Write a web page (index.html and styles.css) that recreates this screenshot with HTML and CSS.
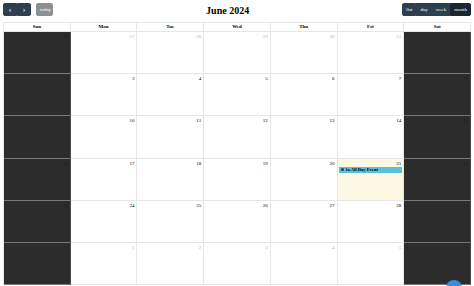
FILE: index.html
```html
<!DOCTYPE html>
<html lang="en">
<head>
    <meta charset="UTF-8">
    <title>Calendar</title>
    <link rel="stylesheet" href="styles.css">
</head>
<body>
    <div class="calendar">
        <div class="toolbar">
            <div class="left">
                <div class="btn-group">
                    <button class="btn">&#8249;</button>
                    <button class="btn">&#8250;</button>
                </div>
                <button class="btn btn-today">today</button>
            </div>
            <h2 class="title">June 2024</h2>
            <div class="btn-group">
                <button class="btn">list</button>
                <button class="btn">day</button>
                <button class="btn">week</button>
                <button class="btn active">month</button>
            </div>
        </div>

        <div class="grid">
            <div class="head">Sun</div>
            <div class="head">Mon</div>
            <div class="head">Tue</div>
            <div class="head">Wed</div>
            <div class="head">Thu</div>
            <div class="head">Fri</div>
            <div class="head">Sat</div>

            <div class="day weekend"><span class="num">26</span></div>
            <div class="day other"><span class="num">27</span></div>
            <div class="day other"><span class="num">28</span></div>
            <div class="day other"><span class="num">29</span></div>
            <div class="day other"><span class="num">30</span></div>
            <div class="day other"><span class="num">31</span></div>
            <div class="day weekend"><span class="num">1</span></div>

            <div class="day weekend"><span class="num">2</span></div>
            <div class="day"><span class="num">3</span></div>
            <div class="day"><span class="num">4</span></div>
            <div class="day"><span class="num">5</span></div>
            <div class="day"><span class="num">6</span></div>
            <div class="day"><span class="num">7</span></div>
            <div class="day weekend"><span class="num">8</span></div>

            <div class="day weekend"><span class="num">9</span></div>
            <div class="day"><span class="num">10</span></div>
            <div class="day"><span class="num">11</span></div>
            <div class="day"><span class="num">12</span></div>
            <div class="day"><span class="num">13</span></div>
            <div class="day"><span class="num">14</span></div>
            <div class="day weekend"><span class="num">15</span></div>

            <div class="day weekend"><span class="num">16</span></div>
            <div class="day"><span class="num">17</span></div>
            <div class="day"><span class="num">18</span></div>
            <div class="day"><span class="num">19</span></div>
            <div class="day"><span class="num">20</span></div>
            <div class="day today">
                <span class="num">21</span>
                <div class="event"><span class="dot"></span>1a All Day Event</div>
            </div>
            <div class="day weekend"><span class="num">22</span></div>

            <div class="day weekend"><span class="num">23</span></div>
            <div class="day"><span class="num">24</span></div>
            <div class="day"><span class="num">25</span></div>
            <div class="day"><span class="num">26</span></div>
            <div class="day"><span class="num">27</span></div>
            <div class="day"><span class="num">28</span></div>
            <div class="day weekend"><span class="num">29</span></div>

            <div class="day weekend"><span class="num">30</span></div>
            <div class="day other"><span class="num">1</span></div>
            <div class="day other"><span class="num">2</span></div>
            <div class="day other"><span class="num">3</span></div>
            <div class="day other"><span class="num">4</span></div>
            <div class="day other"><span class="num">5</span></div>
            <div class="day weekend"><span class="num">6</span></div>
        </div>
    </div>
    <div class="fab"></div>
</body>
</html>
```

FILE: styles.css
```css
* {
    margin: 0;
    padding: 0;
    box-sizing: border-box;
}

body {
    font-family: "Liberation Serif", "Times New Roman", serif;
    background: #fff;
    color: #000;
    padding: 3px;
    height: 286px;
    overflow: hidden;
    position: relative;
}

.toolbar {
    display: flex;
    justify-content: space-between;
    align-items: center;
    height: 13px;
    margin-bottom: 6px;
}

.left {
    display: flex;
    gap: 5px;
}

.btn-group {
    display: flex;
}

.btn {
    font-family: "Liberation Serif", serif;
    font-size: 5px;
    color: #fff;
    background: #2c3e50;
    border: 1px solid #2c3e50;
    height: 13px;
    padding: 0 3px;
    border-radius: 0;
}

.btn-group .btn:first-child {
    border-radius: 2px 0 0 2px;
}

.btn-group .btn:last-child {
    border-radius: 0 2px 2px 0;
}

.btn-group:first-child .btn {
    font-size: 9px;
    width: 14px;
    padding: 0;
    line-height: 9px;
}

.btn.active {
    background: #1a252f;
    border-color: #1a252f;
}

.btn-today {
    background: #6c757d;
    border-color: #6c757d;
    border-radius: 2px;
    opacity: 0.8;
    width: 17px;
}

.title {
    font-size: 10px;
    font-weight: 700;
    margin-top: 1px;
}

.grid {
    display: grid;
    grid-template-columns: repeat(7, 1fr);
    grid-template-rows: 9px repeat(6, 42.2px);
    border-top: 1px solid #e6e6e6;
    border-left: 1px solid #e6e6e6;
}

.head {
    font-size: 5px;
    font-weight: 700;
    text-align: center;
    line-height: 8px;
    border-right: 1px solid #e6e6e6;
    border-bottom: 1px solid #e6e6e6;
}

.day {
    border-right: 1px solid #e6e6e6;
    border-bottom: 1px solid #e6e6e6;
    padding: 1px 2px;
    text-align: right;
    font-size: 5px;
}

.num {
    display: block;
    line-height: 7px;
}

.other .num {
    color: #b5b5b5;
}

.weekend {
    background: #2c2c2c;
    border-color: #4a4a4a;
    border-bottom: 1px solid #777;
}

.weekend .num {
    color: #1e1e1e;
}

.today {
    background: #fcf8e3;
}

.event {
    background: #5bc0de;
    font-weight: 700;
    font-size: 4.5px;
    text-align: left;
    line-height: 6px;
    margin: 0 -1px;
    padding-left: 2px;
    display: flex;
    align-items: center;
    gap: 1px;
}

.dot {
    width: 3px;
    height: 3px;
    border-radius: 50%;
    background: #2c3e50;
    margin-right: 1px;
}

.fab {
    position: absolute;
    left: 446px;
    top: 280px;
    width: 16px;
    height: 16px;
    border-radius: 50%;
    background: #3b8de0;
}
```
